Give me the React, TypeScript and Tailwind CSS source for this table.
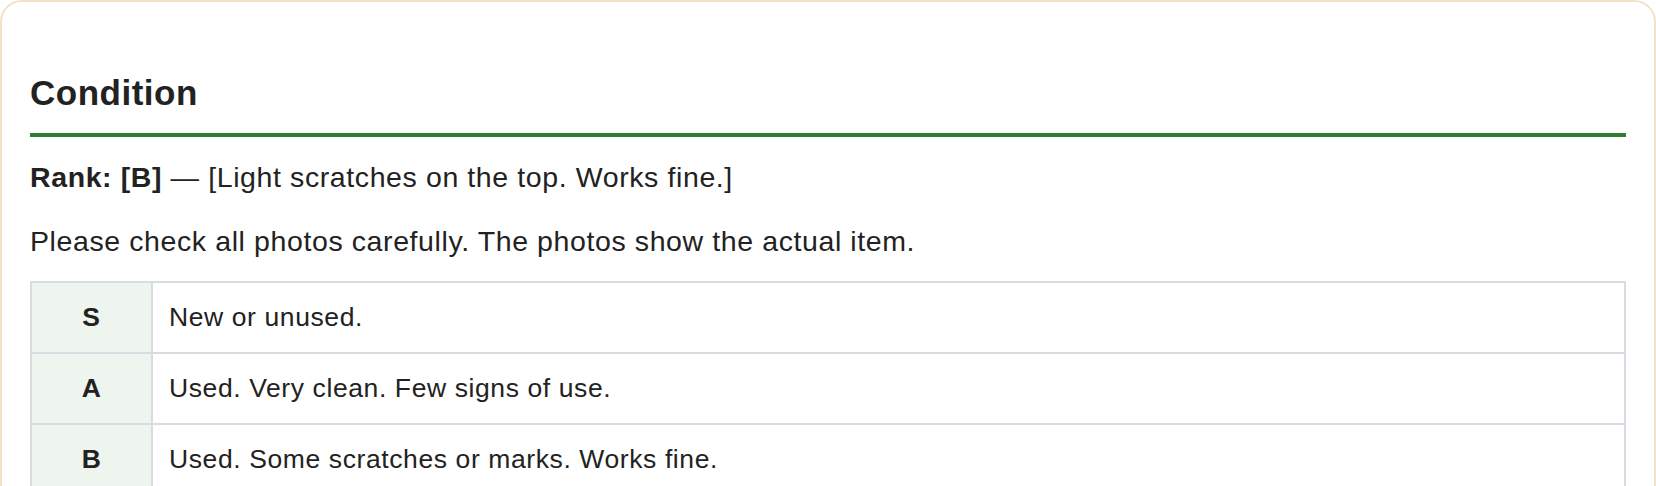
import React from "react";

type Grade = {
  rank: string;
  note: string;
};

const grades: Grade[] = [
  { rank: "S", note: "New or unused." },
  { rank: "A", note: "Used. Very clean. Few signs of use." },
  { rank: "B", note: "Used. Some scratches or marks. Works fine." },
  { rank: "C", note: "Used. Visible scratches or wear. Works fine." },
];

export default function App() {
  return (
    <div
      className="h-[486px] overflow-hidden bg-white text-[#222222]"
      style={{ fontFamily: '"Liberation Sans", Arial, Helvetica, sans-serif' }}
    >
      <section className="rounded-[22px] border-2 border-[#efe4ca] bg-white px-[28px] pb-[28px] pt-[70px]">
        <h2 className="border-b-4 border-[#2e7d32] pb-[19px] text-[35px] font-bold leading-[42px] tracking-[0.5px]">
          Condition
        </h2>

        <p className="mt-[20px] text-[28.5px] leading-[40px] tracking-[0.6px]">
          <span className="font-bold">Rank: [B]</span> — [Light scratches on the top. Works fine.]
        </p>

        <p className="mt-[24px] text-[28.5px] leading-[40px] tracking-[0.6px]">
          Please check all photos carefully. The photos show the actual item.
        </p>

        <table className="mt-[20px] w-full border-collapse border-2 border-[#d7dce3] text-[26.5px] leading-[33px] tracking-[0.6px]">
          <tbody>
            {grades.map((g) => (
              <tr key={g.rank}>
                <th className="w-[121px] border-2 border-[#d7dce3] bg-[#eef5ee] py-[18px] text-center font-bold">
                  {g.rank}
                </th>
                <td className="border-2 border-[#d7dce3] px-[16px] py-[18px] text-left">{g.note}</td>
              </tr>
            ))}
          </tbody>
        </table>
      </section>
    </div>
  );
}
